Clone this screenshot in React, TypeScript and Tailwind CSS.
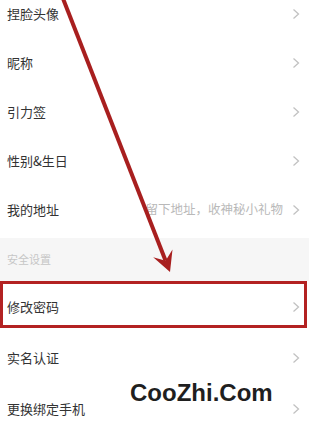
import React from "react";

type Row = { label: string; hint?: string };

const topRows: Row[] = [
  { label: "捏脸头像" },
  { label: "昵称" },
  { label: "引力签" },
  { label: "性别&生日" },
  { label: "我的地址", hint: "留下地址，收神秘小礼物" },
];

const bottomRows: Row[] = [{ label: "修改密码" }, { label: "实名认证" }, { label: "更换绑定手机" }];

function Chevron() {
  return (
    <svg width="8" height="12" viewBox="0 0 8 12" className="shrink-0">
      <path d="M1.5 1.5 L6.5 6 L1.5 10.5" fill="none" stroke="#c2c2c2" strokeWidth="1.3" />
    </svg>
  );
}

function SettingRow({ row, tall, boxed }: { row: Row; tall?: boolean; boxed?: boolean }) {
  return (
    <div className={`relative flex items-center pl-[7px] pr-[9px] bg-white ${tall ? "h-[51px]" : "h-[49px]"}`}>
      <span className="text-[13px] text-[#333]">{row.label}</span>
      <div className="ml-auto flex items-center gap-[9px]">
        {row.hint && <span className="text-[12.5px] text-[#b9b9b9]">{row.hint}</span>}
        <Chevron />
      </div>
      {boxed && (
        <div className="absolute left-0 right-[2px] top-0 h-[47px] border-[3px] border-[#b32222]" />
      )}
    </div>
  );
}

export default function App() {
  return (
    <div
      className="relative w-[309px] h-[425px] overflow-hidden bg-white"
      style={{ fontFamily: '"Noto Sans CJK SC", "Noto Sans", sans-serif' }}
    >
      <div className="-mt-[11px]">
        {topRows.map((r) => (
          <SettingRow key={r.label} row={r} />
        ))}
        <div className="h-[4px] bg-white" />
        <div className="h-[43px] bg-[#f6f6f6] flex items-center pl-[7px]">
          <span className="text-[11px] text-[#c6c6c6]">安全设置</span>
        </div>
        {bottomRows.map((r, i) => (
          <SettingRow key={r.label} row={r} tall boxed={i === 0} />
        ))}
      </div>

      {/* annotation arrow */}
      <svg className="absolute inset-0 pointer-events-none" width="309" height="425" viewBox="0 0 309 425">
        <line x1="62" y1="-4" x2="165.6" y2="260.8" stroke="#a81f1f" strokeWidth="4" />
        <polygon points="170,272 172.5,249.5 165.6,260.8 153.2,257.2" fill="#a81f1f" />
      </svg>

      {/* watermark */}
      <div
        className="absolute left-[130px] top-[381px] text-[24px] font-bold text-[#1f1f1f] leading-none"
        style={{ fontFamily: '"Liberation Sans", Arial, sans-serif' }}
      >
        CooZhi.Com
      </div>
    </div>
  );
}
